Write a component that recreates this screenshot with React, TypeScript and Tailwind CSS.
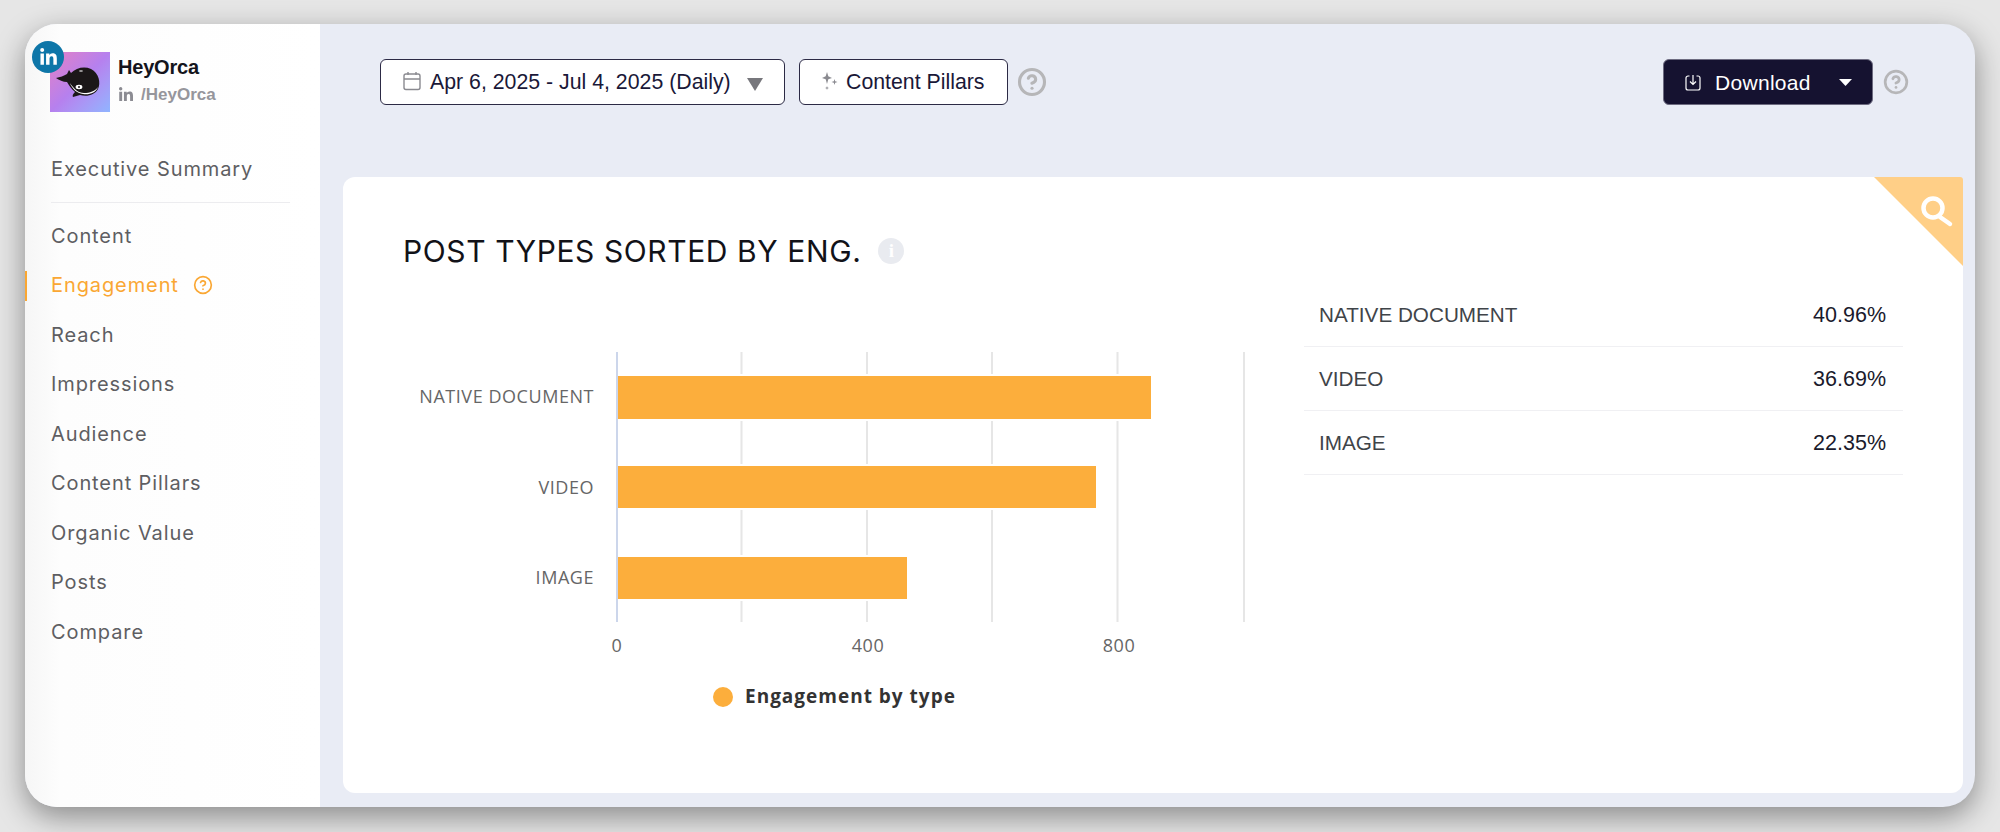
import { CircleHelp } from "lucide-react";
import { FaLinkedinIn } from "react-icons/fa";

const navItems = ["Content", "Engagement", "Reach", "Impressions", "Audience", "Content Pillars", "Organic Value", "Posts", "Compare"];

const bars = [
  { label: "NATIVE DOCUMENT", y: 35, h: 45, w: 535, ty: 57 },
  { label: "VIDEO", y: 125, h: 44, w: 480, ty: 148 },
  { label: "IMAGE", y: 216, h: 44, w: 291, ty: 238 },
];

const rows = [
  { name: "NATIVE DOCUMENT", pct: "40.96%" },
  { name: "VIDEO", pct: "36.69%" },
  { name: "IMAGE", pct: "22.35%" },
];

const OrcaLogo = () => (
  <div className="w-[60px] h-[60px] bg-gradient-to-br from-[#e47fc4] via-[#b680ee] to-[#8fb4ff]">
    <svg viewBox="0 0 60 60" className="w-full h-full">
      <path d="M6 26 C10 25 14 24 17 22 L19 18 L21 21 C26 16 34 14 41 17 C49 21 51 31 48 37 C45 43 37 45 30 43 L23 45 C22 43 24 41 25 40 C21 37 19 33 17 30 C13 30 9 28 6 26 Z" fill="#1b1718" />
      <path d="M20 31 C24 37 28 41 34 41 C40 41 45 39 48 35 C46 41 39 43 33 42 C27 41 22 37 20 31 Z" fill="#fff" />
      <ellipse cx="29" cy="35" rx="3.4" ry="2.2" fill="#fff" />
      <circle cx="29" cy="35" r="1" fill="#1b1718" />
      <ellipse cx="31" cy="19" rx="2" ry="0.8" fill="#fff" opacity="0.8" />
    </svg>
  </div>
);

const Sidebar = () => (
  <aside className="w-[295px] shrink-0 flex flex-col bg-gradient-to-r from-[#f6f6f6] via-[#fdfdfd] via-[12%] to-white">
    <div className="relative flex items-start pl-[25px] pt-[28px] gap-[8px]">
      <div className="absolute left-[7px] top-[17px] w-[32px] h-[32px] rounded-full bg-[#0e76a8] flex items-center justify-center text-white">
        <FaLinkedinIn size={19} />
      </div>
      <OrcaLogo />
      <div className="pt-[2px] font-['Liberation_Sans',sans-serif]">
        <div className="text-[20px] leading-[26px] font-bold text-[#14141c] tracking-[-0.2px]">HeyOrca</div>
        <div className="flex items-center gap-[7px] mt-[3px] text-[#8b8b92]">
          <FaLinkedinIn size={16} />
          <span className="text-[17px] leading-[24px] font-bold opacity-90">/HeyOrca</span>
        </div>
      </div>
    </div>
    <nav className="pl-[26px] pr-[30px] mt-[37px] font-['Inter',sans-serif] text-[20px] tracking-[0.9px] text-[#5e5e62]">
      <div className="h-[40px] flex items-center">Executive Summary</div>
      <div className="h-px bg-[#ececef] mt-[13px] mb-[8px]" />
      {navItems.map((item) =>
        item === "Engagement" ? (
          <div key={item} className="relative h-[49.5px] flex items-center gap-[14px] text-[#faa733]">
            <span className="absolute left-[-26px] top-[10px] w-[2px] h-[30px] bg-[#faa733]" />
            {item}
            <CircleHelp size={20} strokeWidth={2} />
          </div>
        ) : (
          <div key={item} className="h-[49.5px] flex items-center">{item}</div>
        )
      )}
    </nav>
  </aside>
);

const Toolbar = () => (
  <div className="flex items-center h-[46px] mt-[35px] ml-[60px] mr-[66px] font-['Liberation_Sans',sans-serif] text-[21.3px] text-[#1a1838]">
    <button className="w-[405px] h-[46px] flex items-center pl-[21px] pt-[1px] bg-white border border-[#2c2a45] rounded-[6px]">
      <svg width="20" height="20" viewBox="0 0 20 20" fill="none" stroke="#8a8a90" strokeWidth="1.4" className="mr-[8px] -mt-[4px]">
        <rect x="2" y="3" width="16" height="15.5" rx="2" />
        <path d="M2 8h16M6 1v3M14 1v3" />
      </svg>
      <span>Apr 6, 2025 - Jul 4, 2025 (Daily)</span>
      <svg width="16" height="13" viewBox="0 0 16 13" className="ml-[16px] mt-[3px]">
        <path d="M0 0h16L8 13z" fill="#77777c" />
      </svg>
    </button>
    <button className="w-[209px] h-[46px] ml-[14px] flex items-center pl-[21px] pt-[1px] bg-white border border-[#2c2a45] rounded-[6px]">
      <svg width="18" height="20" viewBox="0 0 18 20" fill="#8a8a90" className="mr-[7px] -mt-[3px]">
        <path d="M6 1l1.3 4.2L11 7 7.3 8.3 6 13 4.7 8.3 1 7l3.7-1.8z" />
        <path d="M13.5 8l.7 2.3 2.3.7-2.3.8-.7 2.2-.7-2.2-2.3-.8 2.3-.7z" />
        <path d="M6 15l.5 1.5 1.5.5-1.5.5L6 19l-.5-1.5L4 17l1.500-.5z" />
      </svg>
      <span>Content Pillars</span>
    </button>
    <CircleHelp size={30} strokeWidth={2.5} className="ml-[9px] text-[#b6b6b8]" />
    <button className="ml-auto w-[210px] h-[46px] flex items-center pl-[21px] pt-[1px] bg-[#151230] rounded-[6px] text-white border border-[#6d6b80]">
      <svg width="16" height="17" viewBox="0 0 16 17" fill="none" stroke="#fff" strokeWidth="1.2">
        <path d="M4.500 2H3a2 2 0 0 0-2 2v10a2 2 0 0 0 2 2h10a2 2 0 0 0 2-2V4a2 2 0 0 0-2-2h-1.500" />
        <path d="M8 1v9M5 7.500L8 10.500l3-3" />
      </svg>
      <span className="ml-[14px] text-[21px] tracking-[0.3px]">Download</span>
      <svg width="13" height="7" viewBox="0 0 13 7" className="ml-[28px]">
        <path d="M0 0h13L6.500 7z" fill="#fff" />
      </svg>
    </button>
    <CircleHelp size={26} strokeWidth={2.5} className="ml-[10px] text-[#b6b6b8]" />
  </div>
);

const Chart = () => (
  <svg width="856" height="380" viewBox="0 0 856 380" className="block font-['Open_Sans',sans-serif]">
    {[337.5, 463, 588, 713.5, 840].map((x) => (
      <line key={x} x1={x} x2={x} y1={12} y2={282} stroke="#e6e6e6" strokeWidth="2" />
    ))}
    {bars.map((b) => (
      <g key={b.label}>
        <rect x={213} y={b.y} width={b.w} height={b.h} fill="#fcae3c" stroke="#ffffff" strokeWidth="2" />
        <text x={190} y={b.ty + 6} textAnchor="end" fontSize="18" fill="#666666" letterSpacing="0.55">{b.label}</text>
      </g>
    ))}
    <line x1={213} x2={213} y1={12} y2={282} stroke="#ccd6eb" strokeWidth="2" />
    {[{ x: 213, t: "0" }, { x: 464, t: "400" }, { x: 715, t: "800" }].map((l) => (
      <text key={l.t} x={l.x} y={312} textAnchor="middle" fontSize="18" fill="#666666" letterSpacing="0.5">{l.t}</text>
    ))}
    <circle cx={319} cy={357} r={10} fill="#fcae3c" />
    <text x={341} y={363} fontSize="19" fontWeight="700" fill="#333333" letterSpacing="1">Engagement by type</text>
  </svg>
);

const Card = () => (
  <section className="relative flex-1 ml-[23px] mr-[12px] mb-[14px] mt-[72px] pl-[61px] pt-[56px] bg-white rounded-[12px]">
    <div className="absolute top-0 right-0">
      <svg width="89" height="89" viewBox="0 0 89 89" className="block">
        <path d="M0 0h86a3 3 0 0 1 3 3v86z" fill="#ffcf87" />
        <circle cx="59" cy="31" r="9.500" fill="none" stroke="#fff" strokeWidth="4.500" />
        <path d="M66 40l10 7" stroke="#fff" strokeWidth="4.500" strokeLinecap="round" />
      </svg>
    </div>
    <div className="flex items-center h-[36px] gap-[17px]">
      <h2 className="font-['Inter',sans-serif] font-normal text-[30px] tracking-[0.6px] text-[#121218] -ml-px">POST TYPES SORTED BY ENG.</h2>
      <div className="w-[26px] h-[26px] rounded-full bg-[#e9ebf0] flex items-center justify-center font-['Liberation_Serif',serif] font-bold text-[19px] text-white">i</div>
    </div>
    <div className="flex items-start">
      <div className="mt-[71px]">
        <Chart />
      </div>
      <div className="ml-[44px] mt-[14px] w-[599px] font-['Liberation_Sans',sans-serif] text-[20.7px]">
        {rows.map((r) => (
          <div key={r.name} className="h-[64px] flex items-center justify-between pl-[15px] pr-[17px] border-b border-[#f0f0f3]">
            <span className="text-[#3f4449]">{r.name}</span>
            <span className="text-[21.5px] leading-[24px] pt-[1px] text-[#1a1a2c]">{r.pct}</span>
          </div>
        ))}
      </div>
    </div>
  </section>
);

export default function App() {
  return (
    <div className="w-[2000px] h-[832px] bg-[#e6e6e6] overflow-hidden pl-[25px] pr-[25px] pt-[24px] pb-[25px]">
      <div className="h-full flex rounded-[32px] overflow-hidden bg-[#e9ecf5] shadow-[0_10px_30px_rgba(0,0,0,0.4)]">
        <Sidebar />
        <main className="flex-1 flex flex-col min-w-0">
          <Toolbar />
          <Card />
        </main>
      </div>
    </div>
  );
}
